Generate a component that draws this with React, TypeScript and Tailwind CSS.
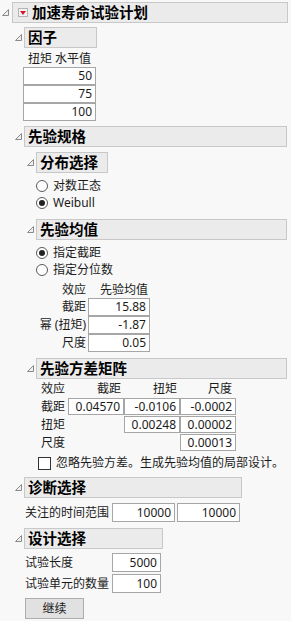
import React from "react";

const tri = (
    <svg width="7" height="7" viewBox="0 0 7 7" className="block">
        <path d="M6.5 0.5 L6.5 6.5 L0.5 6.5 Z" fill="#f0f0f0" stroke="#8a8a8a" strokeWidth="1" />
    </svg>
);

function Header({ title, w, pl = "pl-[3px]", children }: { title: string; w: string; pl?: string; children?: React.ReactNode }) {
    return (
        <div className="flex items-center">
            <div className={`w-[12px] flex ${pl}`}>{tri}</div>
            <div className={`${w} h-[21px] border border-[#c8c8c8] bg-[#ebebeb] flex items-center pl-[3px] text-[14.5px] font-bold text-black`}>
                {children}
                {title}
            </div>
        </div>
    );
}

function Box({ v, w, h = "h-[18px]" }: { v: string; w: string; h?: string }) {
    return (
        <div className={`${w} ${h} border border-[#a6a6a6] bg-white flex items-center justify-end pr-[3px] text-[12px] text-[#1b1b1b]`}>{v}</div>
    );
}

function Radio({ on, label }: { on?: boolean; label: string }) {
    return (
        <div className="h-[17px] flex items-center gap-[5px]">
            <span className="w-[12px] h-[12px] rounded-full border border-[#5a5a5a] bg-white flex items-center justify-center">
                {on && <span className="w-[6px] h-[6px] rounded-full bg-[#222]"></span>}
            </span>
            <span>{label}</span>
        </div>
    );
}

export default function App() {
    const matrix = [
        ["截距", "0.04570", "-0.0106", "-0.0002"],
        ["扭矩", "", "0.00248", "0.00002"],
        ["尺度", "", "", "0.00013"]
    ];
    return (
        <div className="w-[291px] h-[621px] bg-[#f8f8f8] pt-[2px] text-[12px] text-[#1b1b1b] font-['Noto_Sans','Noto_Sans_CJK_SC',sans-serif] overflow-hidden">
            {/* top outline */}
            <Header title="加速寿命试验计划" w="w-[276px]" pl="pl-[2px]">
                <span className="w-[10px] h-[9px] ml-[2px] mr-[4px] border border-[#b4b4b4] bg-[#f4f4f4] flex items-center justify-center">
                    <svg width="6" height="4" viewBox="0 0 6 4"><path d="M0 0 L6 0 L3 4 Z" fill="#d8182f" /></svg>
                </span>
            </Header>
            <div className="pl-[12px]">
                {/* 因子 */}
                <div className="mt-[4px]"><Header title="因子" w="w-[73px]" /></div>
                <div className="pl-[11px]">
                    <div className="mt-[3px] h-[16px] flex items-center pl-[5px]">扭矩 水平值</div>
                    <Box v="50" w="w-[73px]" />
                    <Box v="75" w="w-[73px]" />
                    <Box v="100" w="w-[73px]" />
                </div>

                {/* 先验规格 */}
                <div className="mt-[5px]"><Header title="先验规格" w="w-[263px]" /></div>
                <div className="pl-[12px]">
                    <div className="mt-[5px]"><Header title="分布选择" w="w-[72px]" /></div>
                    <div className="pl-[12px] mt-[4px]">
                        <Radio label="对数正态" />
                        <Radio on label="Weibull" />
                    </div>

                    <div className="mt-[8px]"><Header title="先验均值" w="w-[251px]" /></div>
                    <div className="pl-[12px]">
                        <div className="mt-[4px]">
                            <Radio on label="指定截距" />
                            <Radio label="指定分位数" />
                        </div>
                        <div className="mt-[4px] grid grid-cols-[50px_62px] gap-x-[2px]">
                            <div className="h-[16px] flex items-center justify-end">效应</div>
                            <div className="h-[16px] flex items-center justify-end pr-[2px]">先验均值</div>
                            <div className="h-[18px] flex items-center justify-end">截距</div>
                            <Box v="15.88" w="w-[62px]" />
                            <div className="h-[18px] flex items-center justify-end">幂 (扭矩)</div>
                            <Box v="-1.87" w="w-[62px]" />
                            <div className="h-[18px] flex items-center justify-end">尺度</div>
                            <Box v="0.05" w="w-[62px]" />
                        </div>
                    </div>

                    <div className="mt-[6px]"><Header title="先验方差矩阵" w="w-[251px]" /></div>
                    <div className="pl-[17px]">
                        <div className="mt-[2px] grid grid-cols-[27px_56px_56px_56px] gap-y-[1px]">
                            <div className="h-[16px] flex items-center">效应</div>
                            <div className="h-[16px] flex items-center justify-end pr-[3px]">截距</div>
                            <div className="h-[16px] flex items-center justify-end pr-[3px]">扭矩</div>
                            <div className="h-[16px] flex items-center justify-end pr-[4px]">尺度</div>
                            {matrix.map(r => (
                                <React.Fragment key={r[0]}>
                                    <div className="h-[17px] flex items-center">{r[0]}</div>
                                    {r.slice(1).map((c, i) => c ? <Box key={i} v={c} w="w-[56px]" h="h-[17px]" /> : <div key={i}></div>)}
                                </React.Fragment>
                            ))}
                        </div>
                    </div>
                    <div className="mt-[4px] h-[16px] flex items-center gap-[5px] pl-[14px]">
                        <span className="w-[13px] h-[13px] border border-[#333] bg-white"></span>
                        <span>忽略先验方差。生成先验均值的局部设计。</span>
                    </div>
                </div>

                {/* 诊断选择 */}
                <div className="mt-[6px]"><Header title="诊断选择" w="w-[218px]" /></div>
                <div className="pl-[13px] mt-[5px] flex items-center">
                    <div className="w-[87px]">关注的时间范围</div>
                    <Box v="10000" w="w-[63px]" h="h-[19px]" />
                    <div className="w-[2px]"></div>
                    <Box v="10000" w="w-[63px]" h="h-[19px]" />
                </div>

                {/* 设计选择 */}
                <div className="mt-[6px]"><Header title="设计选择" w="w-[139px]" /></div>
                <div className="pl-[13px] mt-[4px] flex flex-col gap-[2px]">
                    <div className="flex items-center">
                        <div className="w-[87px]">试验长度</div>
                        <Box v="5000" w="w-[49px]" h="h-[19px]" />
                    </div>
                    <div className="flex items-center">
                        <div className="w-[87px]">试验单元的数量</div>
                        <Box v="100" w="w-[49px]" h="h-[19px]" />
                    </div>
                    <button className="mt-[3px] w-[59px] h-[21px] border border-[#adadad] bg-[#e1e1e1] text-[12px] text-[#1b1b1b] flex items-center justify-center">继续</button>
                </div>
            </div>
        </div>
    );
}
